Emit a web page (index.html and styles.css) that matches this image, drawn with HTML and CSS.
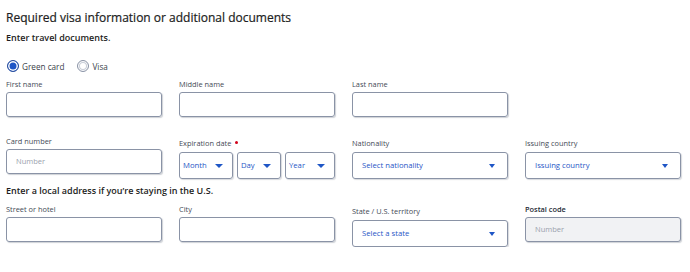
FILE: index.html
```html
<!DOCTYPE html>
<html lang="en">
<head>
<meta charset="UTF-8">
<meta name="viewport" content="width=device-width, initial-scale=1.0">
<title>Travel documents</title>
<link rel="stylesheet" href="styles.css">
</head>
<body>
<div class="container">
  <div class="title">Required visa information or additional documents</div>
  <div class="subtitle">Enter travel documents.</div>

  <div class="radios">
    <div class="radio"><span class="dot checked"></span><span class="radio-text">Green card</span></div>
    <div class="radio"><span class="dot"></span><span class="radio-text">Visa</span></div>
  </div>

  <div class="row row-first">
    <div class="field">
      <div class="label">First name</div>
      <div class="input"></div>
    </div>
    <div class="field">
      <div class="label">Middle name</div>
      <div class="input"></div>
    </div>
    <div class="field">
      <div class="label">Last name</div>
      <div class="input"></div>
    </div>
  </div>

  <div class="row row-second">
    <div class="field">
      <div class="label">Card number</div>
      <div class="input placeholder">Number</div>
    </div>
    <div class="field field-select">
      <div class="label">Expiration date<span class="required"></span></div>
      <div class="date-selects">
        <div class="select month">Month<span class="arrow"></span></div>
        <div class="select day">Day<span class="arrow"></span></div>
        <div class="select year">Year<span class="arrow"></span></div>
      </div>
    </div>
    <div class="field field-select">
      <div class="label">Nationality</div>
      <div class="select wide">Select nationality<span class="arrow"></span></div>
    </div>
    <div class="field field-select">
      <div class="label">Issuing country</div>
      <div class="select wide">Issuing country<span class="arrow"></span></div>
    </div>
  </div>

  <div class="section">Enter a local address if you’re staying in the U.S.</div>

  <div class="row row-third">
    <div class="field">
      <div class="label">Street or hotel</div>
      <div class="input"></div>
    </div>
    <div class="field">
      <div class="label">City</div>
      <div class="input"></div>
    </div>
    <div class="field field-select">
      <div class="label">State / U.S. territory</div>
      <div class="select wide">Select a state<span class="arrow"></span></div>
    </div>
    <div class="field">
      <div class="label dark">Postal code</div>
      <div class="input placeholder disabled">Number</div>
    </div>
  </div>
</div>
</body>
</html>
```

FILE: styles.css
```css
:root {
  --text-dark: #1c1d21;
  --label: #454a56;
  --border: #8a93a6;
  --blue: #1f56c6;
  --placeholder: #9aa1ad;
}

* {
  margin: 0;
  padding: 0;
  box-sizing: border-box;
}

body {
  font-family: 'Open Sans', 'Liberation Sans', sans-serif;
  background: #fff;
  color: var(--text-dark);
}

.container {
  width: 690px;
  padding: 0 6px;
}

.title {
  font-size: 12px;
  font-weight: 500;
  line-height: 18px;
  margin-top: 9px;
  -webkit-text-stroke: 0.2px var(--text-dark);
}

.subtitle {
  font-size: 9px;
  font-weight: 600;
  line-height: 12px;
  margin-top: 5px;
}

.radios {
  display: flex;
  align-items: center;
  gap: 13px;
  height: 14px;
  margin-top: 15px;
  padding-left: 1px;
}

.radio {
  display: flex;
  align-items: center;
  gap: 3px;
}

.radio-text {
  font-size: 8.2px;
  color: #3a3f4a;
}

.dot {
  width: 12px;
  height: 12px;
  border-radius: 50%;
  border: 1px solid var(--border);
  box-shadow: inset 0 0 0 1px #fff, inset 0 0 0 2px #c9ced8;
}

.dot.checked {
  border-color: #2a4f9e;
  background: var(--blue);
  box-shadow: inset 0 0 0 1.5px #fff;
}

.row {
  display: grid;
  grid-template-columns: repeat(4, 156px);
  column-gap: 17px;
  align-items: start;
}

.row-first {
  margin-top: 6px;
}

.row-second {
  margin-top: 19px;
}

.row-third {
  margin-top: 7px;
}

.field {
  display: flex;
  flex-direction: column;
}

.label {
  font-size: 7.4px;
  line-height: 10px;
  color: var(--label);
  margin-bottom: 3px;
}

.label.dark {
  color: #262b36;
  font-weight: 600;
}

.field-select {
  padding-top: 2px;
}

.field-select .label {
  margin-bottom: 4px;
}

.required {
  display: inline-block;
  width: 3px;
  height: 3px;
  border-radius: 50%;
  background: #d0021b;
  margin-left: 4px;
  vertical-align: 2px;
}

.input {
  height: 25px;
  border: 1px solid var(--border);
  border-radius: 3px;
  box-shadow: 1px 1px 1px rgba(60, 70, 90, 0.25);
  font-size: 7.5px;
  line-height: 23px;
  padding-left: 9px;
}

.placeholder {
  color: var(--placeholder);
}

.disabled {
  background: #f1f2f4;
}

.select {
  position: relative;
  height: 27px;
  border: 1px solid var(--border);
  border-radius: 3px;
  box-shadow: 1px 1px 1px rgba(60, 70, 90, 0.2);
  font-size: 7.7px;
  line-height: 25px;
  color: var(--blue);
  padding-left: 3px;
}

.select.wide {
  padding-left: 9px;
}

.arrow {
  position: absolute;
  right: 9px;
  top: 11px;
  width: 0;
  height: 0;
  border-left: 4px solid transparent;
  border-right: 4px solid transparent;
  border-top: 4px solid var(--blue);
}

.select.wide .arrow {
  right: 12px;
  top: 11px;
  border-left-width: 3px;
  border-right-width: 3px;
  border-top-width: 4px;
}

.date-selects {
  display: flex;
  gap: 4px;
}

.month {
  width: 54px;
}

.day {
  width: 44px;
}

.year {
  width: 50px;
}

.section {
  font-size: 9px;
  font-weight: 600;
  line-height: 13px;
  margin-top: 5px;
}
```
